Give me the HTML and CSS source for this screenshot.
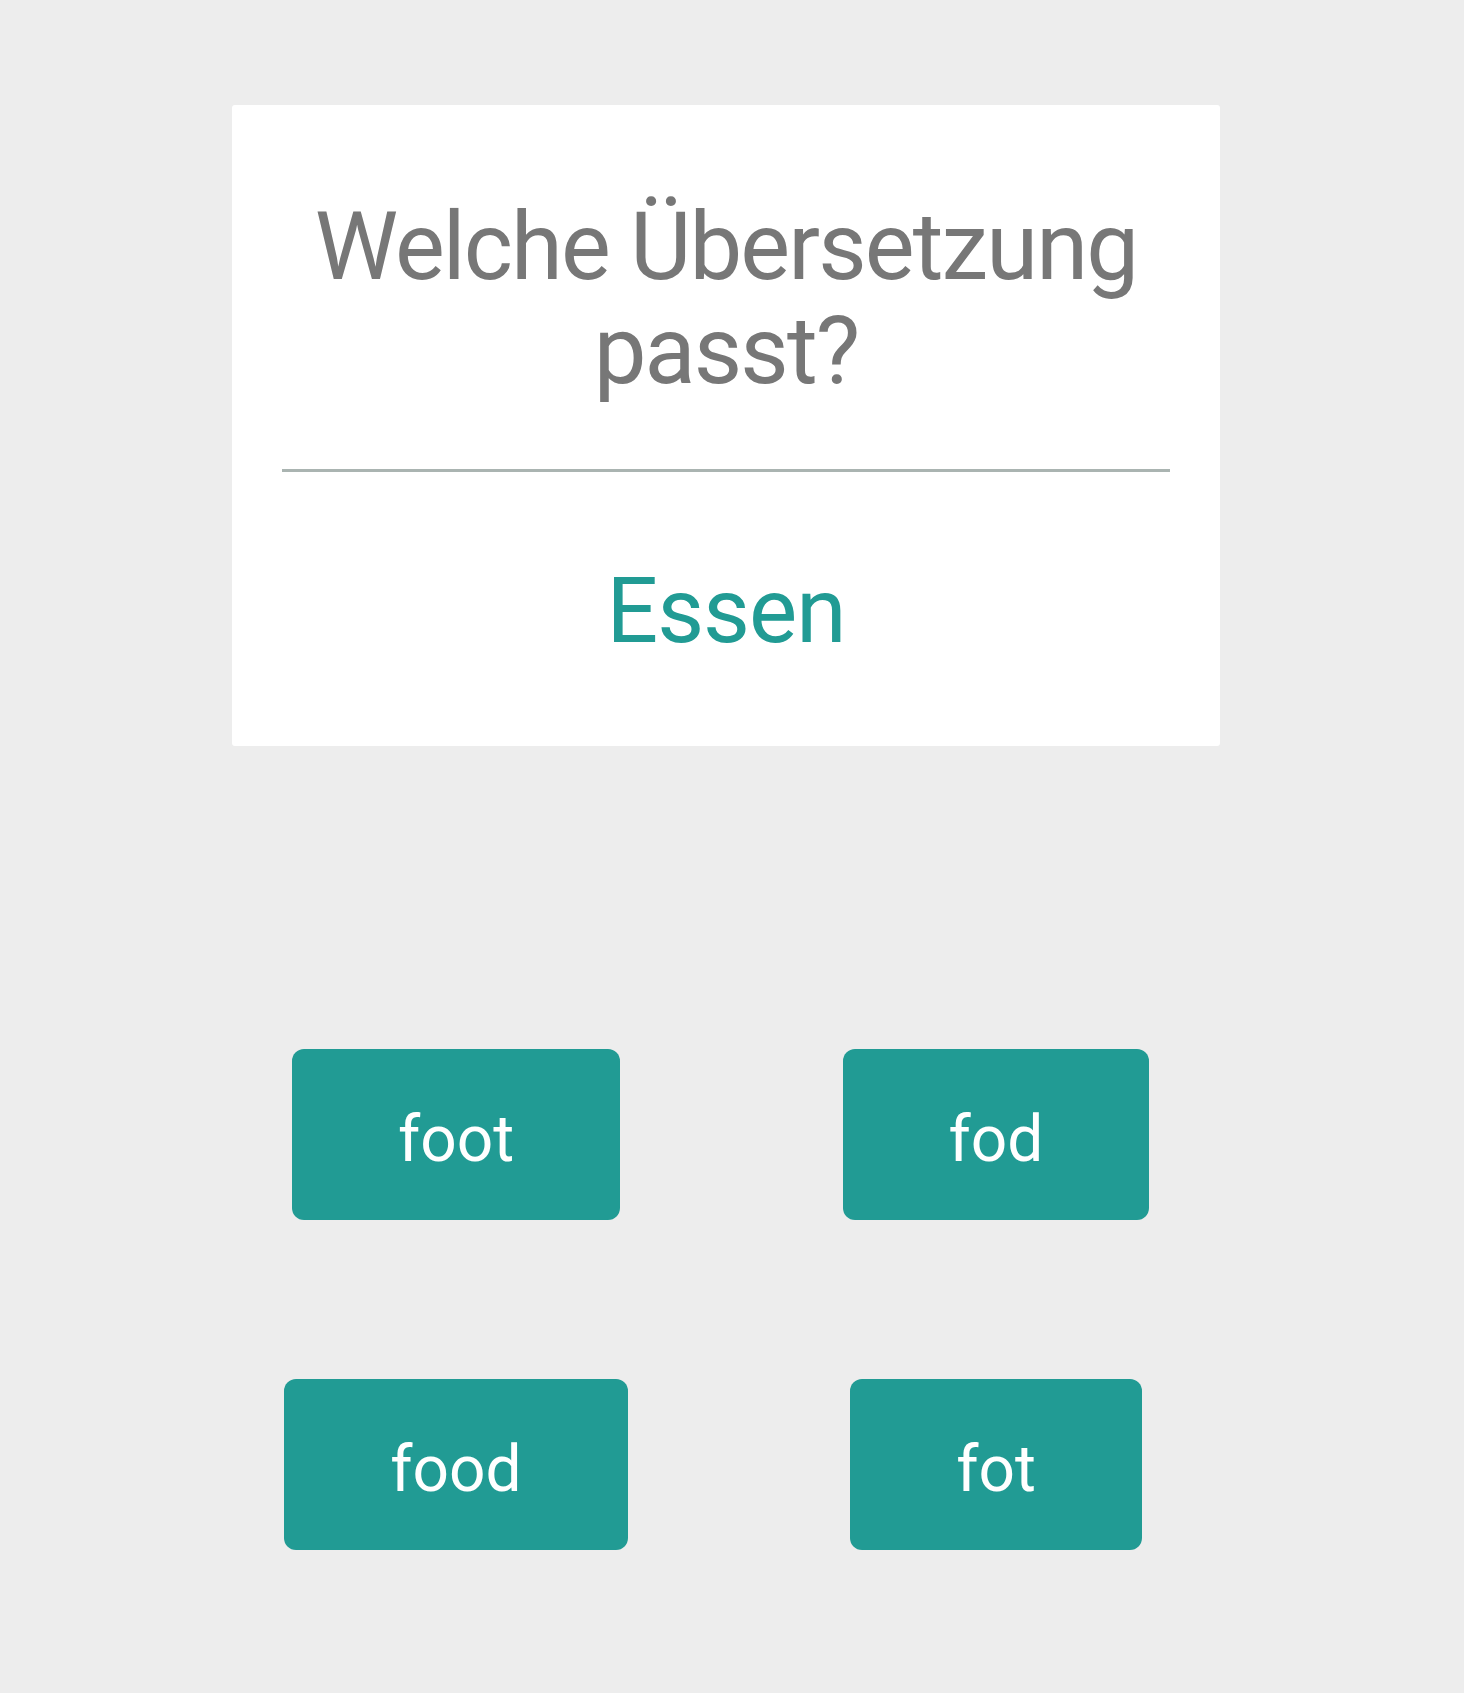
FILE: index.html
```html
<!DOCTYPE html>
<html lang="de">
<head>
<meta charset="utf-8">
<title>Quiz</title>
<link rel="stylesheet" href="styles.css">
</head>
<body>
<main class="page">
  <section class="card">
    <h1 class="question">Welche Übersetzung<br>passt?</h1>
    <hr class="divider">
    <p class="word">Essen</p>
  </section>
  <div class="answers">
    <button class="answer">foot</button>
    <button class="answer">fod</button>
    <button class="answer">food</button>
    <button class="answer">fot</button>
  </div>
</main>
</body>
</html>
```
FILE: styles.css
```css
html, body {
  margin: 0;
  padding: 0;
  background: #ededed;
}
body {
  font-family: Roboto, "Liberation Sans", sans-serif;
}
.page {
  padding-top: 105px;
  padding-bottom: 143px;
}
.card {
  margin-left: 232px;
  width: 988px;
  background: #ffffff;
  border-radius: 3px;
  padding: 90px 0 80px;
  box-sizing: border-box;
  text-align: center;
}
.question {
  margin: 0;
  font-size: 94px;
  line-height: 104px;
  font-weight: 400;
  letter-spacing: -1.9px;
  color: #777777;
}
.divider {
  margin: 66px 50px 0;
  border: 0;
  height: 3px;
  background: #aab4b1;
}
.word {
  margin: 85px 0 0;
  font-size: 91px;
  line-height: 109px;
  letter-spacing: -1px;
  color: #219b94;
}
.answers {
  margin-top: 303px;
  margin-left: 186px;
  width: 1080px;
  display: grid;
  grid-template-columns: 540px 540px;
  row-gap: 159px;
  justify-items: center;
}
.answer {
  height: 171px;
  padding: 10px 106px 0;
  border: 0;
  border-radius: 12px;
  background: #219b94;
  color: #ffffff;
  font-family: Roboto, "Liberation Sans", sans-serif;
  font-size: 64px;
  font-weight: 400;
  display: flex;
  align-items: center;
  justify-content: center;
}
```
